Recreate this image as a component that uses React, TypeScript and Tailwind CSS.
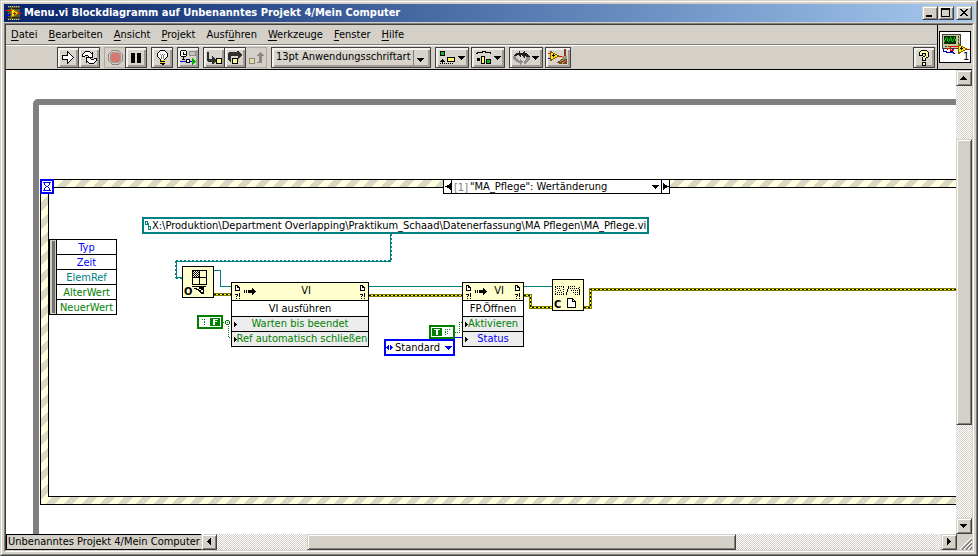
import React from 'react';

interface ToolButtonProps {
  label: string;
  disabled?: boolean;
  wide?: boolean;
  children: React.ReactNode;
}

const raised =
  'border border-t-[#d4d0c8] border-l-[#d4d0c8] border-r-[#404040] border-b-[#404040] shadow-[inset_1px_1px_0_#fff,inset_-1px_-1px_0_#808080] bg-[#d4d0c8]';
const checker =
  'bg-[conic-gradient(#fff_25%,#d4d0c8_0_50%,#fff_0_75%,#d4d0c8_0)] bg-size-[2px_2px]';

const Drawing: React.FC<{ w: number; h: number; children: React.ReactNode }> = ({ w, h, children }) => (
  <svg width={w} height={h} viewBox={`0 0 ${w} ${h}`} fill="none" shapeRendering="crispEdges" aria-hidden="true" className="block shrink-0">
    {children}
  </svg>
);

const ToolButton: React.FC<ToolButtonProps> = ({ label, disabled, wide, children }) => (
  <button
    aria-label={label}
    disabled={disabled}
    className={`flex h-[21px] shrink-0 items-center justify-center border ${wide ? 'w-[34px] gap-0.5' : 'w-[22px]'} ${
      disabled
        ? 'border-[#aca8a0] bg-[#d4d0c8]'
        : 'relative border-[#404040] bg-[#d8d4cc] shadow-[inset_2px_2px_0_#f4f2ee,inset_-2px_-2px_0_#a09c94]'
    }`}
  >
    {children}
  </button>
);

const SmallDown = () => (
  <Drawing w={7} h={4}>
    <path fill="#000" d="M0 0h7v1h-1v1h-1v1h-1v1h-1v-1h-1v-1h-1v-1h-1z" />
  </Drawing>
);

const menus = ['Datei', 'Bearbeiten', 'Ansicht', 'Projekt', 'Ausführen', 'Werkzeuge', 'Fenster', 'Hilfe'];
const hotkeys: Record<string, number> = { Ausführen: 4 };

const TitleBar = () => (
  <div className="flex h-[18px] shrink-0 items-center bg-linear-to-r from-[#0a246a] to-[#a6caf0] px-0.5 text-white">
    <Drawing w={16} h={16}>
      <path fill="#585838" d="M2 1h12v14h-12z" />
      <path stroke="#d0d0a8" strokeDasharray="1 1" d="M2 1.5h12M2 14.5h12" />
      <path stroke="#202010" d="M2 3.5h12M2 12.5h12" />
      <path fill="#ffe000" stroke="#a08000" d="M5.5 3.5v9l7-4.5z" />
      <path stroke="#f00" d="M0 5.5h5M12 8.5h4" />
      <path stroke="#00f" d="M0 10.5h3v-1h2" />
      <path stroke="#804000" d="M7 8.5h3M8.5 7v3" />
    </Drawing>
    <h1 className="ml-0.5 flex-1 truncate text-[11px] leading-4 font-bold">
      Menu.vi Blockdiagramm auf Unbenanntes Projekt 4/Mein Computer
    </h1>
    <button aria-label="Minimieren" className={`h-3.5 w-4 ${raised}`}>
      <Drawing w={14} h={12}><path fill="#000" d="M3 8h6v2h-6z" /></Drawing>
    </button>
    <button aria-label="Maximieren" className={`h-3.5 w-4 ${raised}`}>
      <Drawing w={14} h={12}><path stroke="#000" d="M2.5 1.5h8v8h-8zM2 2.5h9" /></Drawing>
    </button>
    <button aria-label="Schließen" className={`ml-0.5 h-3.5 w-4 ${raised}`}>
      <Drawing w={14} h={12}>
        <path fill="#000" d="M3 2h2v1h1v1h2v-1h1v-1h2v1h-1v1h-1v1h-1v1h1v1h1v1h1v1h-2v-1h-1v-1h-2v1h-1v1h-2v-1h1v-1h1v-1h1v-1h-1v-1h-1v-1h-1z" />
      </Drawing>
    </button>
  </div>
);

const Toolbar = () => (
  <div className="flex h-6 items-center gap-1 border-t border-white pl-[51px] pr-0.5">
    <div className="flex -space-x-px">
      <ToolButton label="Ausführen">
        <Drawing w={12} h={13}><path fill="#fff" stroke="#000" d="M.5 4.5h5v-4l6 6-6 6v-4h-5z" /></Drawing>
      </ToolButton>
      <ToolButton label="Wiederholt ausführen">
        <Drawing w={17} h={15}>
          <path fill="#fff" stroke="#000" d="M3.5 6.5h-2v-2l3-3h4l2 2 1-1v5h-5l1-1-1-1h-2l-1 1z" />
          <path fill="#fff" stroke="#000" d="M13.5 8.5h2v2l-3 3h-4l-2-2-1 1v-5h5l-1 1 1 1h2l1-1z" />
        </Drawing>
      </ToolButton>
    </div>
    <div className="flex -space-x-px">
      <ToolButton label="Abbrechen" disabled>
        <Drawing w={15} h={15}>
          <path fill="#d4d0c8" stroke="#8c8880" d="M4.5.5h6l4 4v6l-4 4h-6l-4-4v-6z" />
          <path fill="#d87870" stroke="#a89490" d="M5 2.5h5l2.5 2.5v5l-2.5 2.5h-5l-2.5-2.5v-5z" />
        </Drawing>
      </ToolButton>
      <ToolButton label="Pause">
        <Drawing w={10} h={10}><path fill="#000" d="M0 0h4v10h-4zM6 0h4v10h-4z" /></Drawing>
      </ToolButton>
    </div>
    <ToolButton label="Highlight-Funktion">
      <Drawing w={11} h={15}>
        <path fill="#fff" stroke="#000" d="M3.5.5h4l3 3v3l-3 3v1h-4v-1l-3-3v-3z" />
        <path stroke="#808080" d="M4.5 9v-4M6.5 9v-4M3 4.5h1M5 4.5h1M7 4.5h1" />
        <path fill="#e8d020" d="M4 10h4v3h-4z" />
        <path stroke="#000" d="M3 11.5h5M3 13.5h5M5 14.5h2" />
      </Drawing>
    </ToolButton>
    <ToolButton label="Verbindungswerte speichern">
      <Drawing w={16} h={15}>
        <path fill="#fff" stroke="#000" d="M1.5.5h4l1 1v4l-1 1h-4l-1-1v-4z" />
        <path stroke="#000" d="M3.5 2v2h2M3.5 7v3M2 9.5h3" />
        <path fill="#c4c4c4" stroke="#909090" d="M9.5 1.5h6v4h-6z" />
        <path stroke="#00f" d="M0 11.5h6M9 11.5h3" />
        <path fill="#fff" stroke="#000" d="M6.5 9.5h3v3h-3z" />
        <path fill="#00b000" d="M12 8l4 3.5-4 3.5z" />
      </Drawing>
    </ToolButton>
    <div className="flex -space-x-px">
      <ToolButton label="Hineinspringen">
        <Drawing w={16} h={14}>
          <path fill="#303030" d="M1 1h2v7h3v-3h1l3 4v1l-3 3h-1v-2h-4l-1-1z" />
          <path fill="#ffff80" stroke="#000" d="M10.5 7.5h5v5h-5z" />
        </Drawing>
      </ToolButton>
      <ToolButton label="Überspringen">
        <Drawing w={16} h={14}>
          <path fill="#303030" d="M1 2l1-1h8v-1h1l4 3v1l-3 4h-1v-3h-7v6h-1l-2-2z" />
          <path fill="#ffff80" stroke="#000" d="M5.5 7.5h5v5h-5z" />
        </Drawing>
      </ToolButton>
      <ToolButton label="Herausspringen" disabled>
        <Drawing w={16} h={14}>
          <path fill="#8c8880" d="M9 11h2v-6h-3l4-4 4 4h-2v7h-5z" />
          <path fill="#e0e0a8" stroke="#8c8880" d="M1.5 7.5h5v5h-5z" />
        </Drawing>
      </ToolButton>
    </div>
    <div className="relative">
      <select
        aria-label="Schriftart"
        className="block h-[21px] w-[160px] appearance-none border border-[#404040] bg-[#d8d4cc] pb-0.5 pl-1 text-[11px] leading-4 shadow-[inset_2px_2px_0_#f4f2ee,inset_-2px_-2px_0_#a09c94]"
      >
        <option>13pt Anwendungsschriftart</option>
      </select>
      <div className="pointer-events-none absolute inset-y-[3px] right-0 flex w-[18px] items-center justify-center border-l border-[#808080] pt-1 pr-1">
        <SmallDown />
      </div>
    </div>
    <div className="flex gap-0.5">
      <ToolButton label="Objekte ausrichten" wide>
        <Drawing w={16} h={13}>
          <path fill="#00c020" stroke="#000" d="M.5.5h4v4h-4z" />
          <path stroke="#000" d="M2.5 8v4M0 10.5h5M1 9.500h3" />
          <path stroke="#000" strokeDasharray="1 1" d="M0 12.5h14" />
          <path fill="#ffff60" stroke="#000" d="M7.5 6.5h7v4h-7z" />
        </Drawing>
        <SmallDown />
      </ToolButton>
      <ToolButton label="Objekte einteilen" wide>
        <Drawing w={16} h={13}>
          <path stroke="#000" d="M0 2.5h1v-1h5v-1h3v1h5v1h1" />
          <path fill="#000" d="M1 7h3v3h-3z" />
          <path fill="#ffff60" stroke="#000" d="M5.5 5.5h3v7h-3z" />
          <path fill="#00c020" stroke="#000" d="M10.5 8.5h4v4h-4z" />
        </Drawing>
        <SmallDown />
      </ToolButton>
    </div>
    <div className="flex gap-0.5">
      <ToolButton label="Neu anordnen" wide>
        <Drawing w={17} h={14}>
          <path fill="#909090" d="M0 5h3l1 3 3 2v-2l3 3-3 3v-2l-4-1-3-3zM13 5h4v3l-3 4-3 1v-3l2-2z" />
          <path fill="#202020" d="M1 4l2-2h3v-2h1v2h2l3-2v2l3 1 2 3h-4l-1-1v2l-4-3v2h-1l-2-2h-1v1h-3z" />
          <path fill="#fff" d="M8 8h1v1h-1zM9 12h1v1h-1z" />
        </Drawing>
        <SmallDown />
      </ToolButton>
      <button
        aria-label="Diagramm aufräumen"
        className="flex h-[21px] w-[26px] items-center justify-center border border-[#404040] bg-[#d8d4cc] shadow-[inset_2px_2px_0_#f4f2ee,inset_-2px_-2px_0_#a09c94]"
      >
        <Drawing w={20} h={17}>
          <path stroke="#f00" d="M0 4.5h3M11 7.5h4" />
          <path stroke="#00f" d="M0 9.5h3" />
          <path fill="#ffe800" stroke="#806000" d="M2.5 2.5v9l8-4.5z" />
          <path stroke="#000" d="M4 6.5h3M5.5 5v3" />
          <path fill="#903020" d="M16 0h2v7h-2z" />
          <path fill="#a09880" d="M14 7h5v3h-5z" />
          <path fill="#704820" d="M13 10h6v5h-7l-4-2 4-1z" />
          <path stroke="#c09858" d="M12 12.5l4-2M14 14.5l4-3" />
        </Drawing>
      </button>
    </div>
    <div className="ml-auto">
      <ToolButton label="Hilfe anzeigen">
        <Drawing w={12} h={16}>
          <path fill="#ffffa0" stroke="#000" d="M3.5.5h5l2 2v4l-3 2v2h-3v-3l3-2v-2h-3v2h-3v-3zM4.5 12.5h3v3h-3z" />
        </Drawing>
      </ToolButton>
    </div>
  </div>
);

const Header = () => (
  <header className="flex h-[45px] shrink-0 border-b border-black">
    <div className="min-w-0 flex-1">
      <nav className="flex h-5 items-center gap-[11px] border-b border-[#808080] pl-[5px]">
        {menus.map((name) => {
          const k = hotkeys[name] ?? 0;
          return (
            <button key={name} className="leading-4">
              {name.slice(0, k)}
              <span className="underline underline-offset-2">{name[k]}</span>
              {name.slice(k + 1)}
            </button>
          );
        })}
      </nav>
      <Toolbar />
    </div>
    <div className="flex w-[35px] items-center justify-center border-l border-black">
      <div className="border border-black bg-white">
        <Drawing w={30} h={30}>
          <path fill="#c8c8a0" stroke="#404030" d="M2.5 2.5h18v14h-18z" />
          <path fill="#003000" d="M4 4h12v8h-12z" />
          <path fill="#00d000" d="M4 8h1v2h-1zM5 6h1v2h-1zM6 5h1v1h-1zM7 6h1v3h-1zM8 9h1v1h-1zM9 7h1v2h-1zM10 5h1v2h-1zM11 6h1v3h-1zM12 9h1v1h-1zM13 7h1v2h-1zM14 5h1v2h-1zM15 7h1v2h-1z" />
          <path stroke="#404020" strokeDasharray="2 1" d="M18.5 4v12M5 14.5h11" />
          <path stroke="#0000a0" d="M3.500 17v2h3v1h4v-1h2v-2M11 20.5h2v1h2" />
          <path stroke="#f00" d="M7.5 18v-2h3v-2h8M10 15.5v3h3v-2M25 17.5h5" />
          <path fill="#ffe800" stroke="#806000" d="M18.5 12.5v9l8-4.5z" />
          <path stroke="#000" d="M20 16.5h3M21.5 15v3" />
          <text x="23" y="28" fontSize="11" fill="#000">1</text>
        </Drawing>
      </div>
    </div>
  </header>
);

const ErrorWire: React.FC<{ d: string }> = ({ d }) => (
  <>
    <path stroke="#808000" strokeWidth="3" d={d} />
    <path stroke="#ffff00" d={d} />
    <path stroke="#000" strokeDasharray="2 2" d={d} />
  </>
);

// wires use window coordinates, shifted by the viewBox origin
const Wires = () => (
  <svg className="absolute top-0 left-0 overflow-visible" width="950" height="464" viewBox="6 70 950 464" fill="none" shapeRendering="crispEdges" aria-hidden="true">
    <path stroke="#008080" strokeDasharray="2 2" d="M391.5 234v28M390 260.5h-214M175.5 261v17M176 278.5h6" />
    <path stroke="#008080" d="M390.5 234v28M391 261.5h-215M176.5 261v17M176 277.5h6" />
    <path stroke="#008080" d="M214 270.5h6.5v16h10.5M369 286.5h93M524 286.5h28" />
    <ErrorWire d="M214 294.5h17" />
    <ErrorWire d="M369 295.5h93" />
    <ErrorWire d="M524 295.5h6.5v12h21.5" />
    <ErrorWire d="M584 307.5h6.5v-18h2000" />
    <path stroke="#008000" strokeDasharray="1 1" d="M223 322.5h8M228.5 324v13.5h3M455 332.5h4.5v-10h3" />
    <path stroke="#008000" fill="#fff" d="M226.5 320.5h2l1 1v2l-1 1h-2l-1-1v-2z" />
    <path fill="#008000" d="M227 322h1v1h-1z" />
    <path stroke="#00f" d="M455 337.5h7" />
  </svg>
);

const PageMarks = () => (
  <Drawing w={7} h={16}>
    <path fill="#fff" stroke="#000" d="M1.5 1.5h2l2 2v3h-4zM3.5 1.5v2h2" />
    <path stroke="#000" d="M1 10.5h2M3.5 10v2M2 12.5h1M2 14.5h1M5.5 9v4M5 14.5h1" />
  </Drawing>
);

const DashArrow = () => (
  <Drawing w={12} h={7}>
    <path fill="#000" d="M0 2h1v3h-1zM2 2h1v3h-1zM4 2h4v-2h1v1h1v1h1v1h1v1h-1v1h-1v1h-1v1h-1v-2h-4z" />
  </Drawing>
);

interface MethodNodeProps {
  method: string;
  className: string;
  children: React.ReactNode;
}

const MethodNode: React.FC<MethodNodeProps> = ({ method, className, children }) => (
  <div className={`absolute top-[212px] border border-black bg-white text-center ${className}`}>
    <div className="relative flex h-[17px] items-center justify-between bg-[#ffffce] px-0.5">
      <PageMarks />
      <span className="absolute left-3"><DashArrow /></span>
      <span className="flex-1 pl-3">VI</span>
      <PageMarks />
    </div>
    <div className="h-4 border-t border-black leading-[15px]">{method}</div>
    {children}
  </div>
);

const Param: React.FC<{ children: string; color: string }> = ({ children, color }) => (
  <div className={`relative h-[15px] border-t border-black bg-[#ececec] leading-[14px] whitespace-nowrap ${color}`}>
    <span className="absolute top-[5px] left-0.5">
      <Drawing w={3} h={5}><path fill="#000" d="M0 0h1v1h1v1h1v1h-1v1h-1v1h-1z" /></Drawing>
    </span>
    {children}
  </div>
);

const Diagram = () => (
  <main className="relative min-w-0 flex-1 overflow-hidden bg-white">
    <div className="absolute top-[29px] -right-2 -bottom-2 left-[27px] rounded-[5px] border-6 border-[#808080]" />
    <div className="absolute top-[109px] -right-5 left-[34px] flex h-[326px] border border-black bg-[linear-gradient(135deg,#ffffe0_25%,#d8d8c4_25%_50%,#ffffe0_50%_75%,#d8d8c4_75%)] bg-size-[18px_18px] bg-position-[-5px_0px] p-[7px]">
      <div className="flex-1 border border-black bg-white" />
    </div>
    <div className="absolute top-[109px] left-[34px]">
      <Drawing w={14} h={15}>
        <path fill="#fff" stroke="#00f" strokeWidth="2" d="M1 1h12v13h-12z" />
        <path stroke="#00f" d="M3 3.5h8M3 11.5h8M4.5 4v2M9.5 4v2M5.5 6v1M8.5 6v1M6 7.5h2M5.5 8v1M8.5 8v1M4.5 9v2M9.5 9v2" />
      </Drawing>
    </div>

    <div className="absolute top-[109px] left-[437px] flex h-[15px] w-[227px] items-stretch border border-black bg-white">
      <button aria-label="Vorheriges Ereignis" className="flex w-2 items-center justify-center border-r border-black">
        <Drawing w={6} h={7}><path fill="#000" d="M6 0v7h-1v-1h-1v-1h-2v-1h-2v-1h2v-1h2v-1h1v-1z" /></Drawing>
      </button>
      <label className="flex min-w-0 flex-1 items-center pl-0.5 leading-[13px]">
        <span className="pt-px text-[#808080]">[1]</span>
        <select aria-label="Ereignis" className="h-[13px] min-w-0 flex-1 appearance-none pl-0.5 leading-[13px]">
          <option>"MA_Pflege": Wertänderung</option>
        </select>
        <Drawing w={10} h={4}><path fill="#000" d="M1 0h7v1h-1v1h-1v1h-1v1h-1v-1h-1v-1h-1v-1h-1z" /></Drawing>
      </label>
      <button aria-label="Nächstes Ereignis" className="flex w-2 items-center justify-center border-l border-black">
        <Drawing w={6} h={7}><path fill="#000" d="M0 0v7h1v-1h1v-1h2v-1h2v-1h-2v-1h-2v-1h-1v-1z" /></Drawing>
      </button>
    </div>

    <div className="absolute top-[147px] left-[136px] flex h-[17px] w-[507px] items-center border-2 border-[#008080]">
      <Drawing w={8} h={11}>
        <path stroke="#008080" d="M1.5 1.5h2v3h-2zM3 3.5h1.5v3M4.5 6.5h2v3h-2z" />
      </Drawing>
      <input aria-label="Pfad" readOnly defaultValue="X:\Produktion\Department Overlapping\Praktikum_Schaad\Datenerfassung\MA Pflegen\MA_Pflege.vi" className="h-[13px] min-w-0 flex-1 pt-px" />
    </div>

    <div className="absolute top-[169px] left-[43px] flex w-[68px] border border-black bg-white">
      <div className="flex w-[7px] justify-center border-r border-black bg-[#d0d0b8] py-px">
        <div className="w-[3px] bg-[#707070]" />
      </div>
      <ul className="flex-1 divide-y divide-black text-center leading-[15px]">
        <li className="h-[15px] text-[#0000ff]">Typ</li>
        <li className="h-[15px] text-[#0000ff]">Zeit</li>
        <li className="h-[15px] text-[#008080]">ElemRef</li>
        <li className="h-[15px] text-[#008000]">AlterWert</li>
        <li className="h-[14px] text-[#008000]">NeuerWert</li>
      </ul>
    </div>

    <Wires />

    <div className="absolute top-[196px] left-[176px]">
      <Drawing w={32} h={32}>
        <path fill="#ffffce" stroke="#000" d="M.5.5h31v31h-31z" />
        <path stroke="#000" d="M10.5 4.5h14v14h-14zM17.5 4v14M10 11.5h14" />
        <path stroke="#000" strokeDasharray="1 1" d="M11 5.5h6M12 6.5h6M11 7.5h6M12 8.5h6M11 9.5h6M12 10.5h6" />
        <path stroke="#000" d="M10 20.5h14M12 22.5h3M14 23.5h3M16 24.5h3M17 25.5h2M18 26.5h3M19 27.5h3M21.5 21v7" />
        <path fill="#000" d="M17 21h5v3h-3v-1h-2z" />
        <text x="2" y="29" fontSize="11" fontWeight="700" fill="#000">O</text>
      </Drawing>
    </div>

    <MethodNode method="VI ausführen" className="left-[225px] w-[138px]">
      <Param color="text-[#008000]">Warten bis beendet</Param>
      <Param color="pl-1 text-[#008000]">Ref automatisch schließen</Param>
    </MethodNode>
    <MethodNode method="FP.Öffnen" className="left-[456px] w-[62px]">
      <Param color="text-[#008000]">Aktivieren</Param>
      <Param color="text-[#0000ff]">Status</Param>
    </MethodNode>

    <div className="absolute top-[209px] left-[546px]">
      <Drawing w={32} h={32}>
        <path fill="#ffffce" stroke="#000" d="M.5.5h31v31h-31z" />
        <path stroke="#000" strokeDasharray="1 1" d="M3 7.5h9M3 15.5h9M3.5 8v8M11.5 8v8M5 9.5h4M6 11.5h4M5 13.5h5M18 7.5h6M18 9.5h10M19 11.5h9M21 13.5h8M23 15.5h6M27.5 8v8" />
        <path stroke="#000" d="M16.5 7v3M15.5 10v3M14.5 13v3" />
        <path fill="#fff" stroke="#000" d="M15.5 19.5h5l3 3v6h-8zM20.5 19.5v3h3" />
        <text x="2" y="29" fontSize="11" fontWeight="700" fill="#000">C</text>
      </Drawing>
    </div>

    <div className="absolute top-[245px] left-[191px]">
      <Drawing w={26} h={14}>
        <path fill="#fff" stroke="#008000" strokeWidth="2" d="M1 1h24v12h-24z" />
        <path stroke="#008000" strokeDasharray="1 1" d="M5 4.5h4M7 6.5h2M7.5 7v4" />
        <path fill="#008000" d="M13 3h10v8h-10z" />
        <path fill="#fff" d="M16 4h5v1h-3v1h2v1h-2v3h-2z" />
      </Drawing>
    </div>
    <div className="absolute top-[255px] left-[423px]">
      <Drawing w={26} h={14}>
        <path fill="#fff" stroke="#008000" strokeWidth="2" d="M1 1h24v12h-24z" />
        <path fill="#008000" d="M3 3h10v8h-10z" />
        <path fill="#fff" d="M5 4h6v1h-2v5h-2v-5h-2z" />
        <path stroke="#008000" strokeDasharray="1 1" d="M16 4.5h5M16 6.5h3M16.5 7v4M18 8.5h2" />
      </Drawing>
    </div>

    <div className="absolute top-[269px] left-[378px] flex h-[17px] w-[71px] items-center border-2 border-[#0000ff] bg-white">
      <Drawing w={8} h={7}>
        <path fill="#00f" d="M3 1v5h-1v-1h-1v-1h-1v-1h1v-1h1v-1zM4 1v5h1v-1h1v-1h1v-1h-1v-1h-1v-1z" />
      </Drawing>
      <select aria-label="FP-Status" className="h-[13px] min-w-0 flex-1 appearance-none pl-px leading-[13px]">
        <option>Standard</option>
      </select>
      <Drawing w={8} h={4}><path fill="#00f" d="M0 0h7v1h-1v1h-1v1h-1v1h-1v-1h-1v-1h-1v-1h-1z" /></Drawing>
    </div>
  </main>
);

const ScrollButton: React.FC<{ label: string; d: string }> = ({ label, d }) => (
  <button aria-label={label} className={`size-4 shrink-0 ${raised}`}>
    <Drawing w={14} h={14}><path fill="#000" d={d} /></Drawing>
  </button>
);

const App: React.FC = () => (
  <div className="flex h-screen flex-col border border-t-[#d4d0c8] border-r-[#404040] border-b-[#404040] border-l-[#d4d0c8] bg-[#d4d0c8] font-['DejaVu_Sans_Condensed','DejaVu_Sans',sans-serif] text-[11px] text-black">
    <div className="flex min-h-0 flex-1 flex-col border border-t-white border-r-[#808080] border-b-[#808080] border-l-white p-0.5">
      <TitleBar />
      <div className="mt-px flex min-h-0 flex-1 flex-col border border-t-[#808080] border-r-white border-b-white border-l-[#808080]">
        <div className="flex min-h-0 flex-1 flex-col border border-t-[#404040] border-r-[#d4d0c8] border-b-[#d4d0c8] border-l-[#404040]">
          <Header />
          <div className="flex min-h-0 flex-1">
            <Diagram />
            <div className={`flex w-4 flex-col ${checker}`}>
              <ScrollButton label="Nach oben" d="M7 5v1h1v1h1v1h1v1h-7v-1h1v-1h1v-1h1v-1z" />
              <div className="grow-53 basis-0" />
              <div className={`grow-286 basis-0 ${raised}`} />
              <div className="grow-94 basis-0" />
              <ScrollButton label="Nach unten" d="M3 5h7v1h-1v1h-1v1h-1v1h-1v-1h-1v-1h-1v-1h-1z" />
            </div>
          </div>
          <footer className="flex h-4 shrink-0">
            <button className="h-4 shrink-0 border-y border-l border-black px-px text-left leading-[14px] whitespace-nowrap">
              Unbenanntes Projekt 4/Mein Computer
            </button>
            <div className={`flex flex-1 ${checker}`}>
              <ScrollButton label="Nach links" d="M5 6v1h1v1h1v1h1v1h1v-7h-1v1h-1v1h-1v1z" />
              <div className="grow-90 basis-0" />
              <div className={`grow-428 basis-0 ${raised}`} />
              <div className="grow-206 basis-0" />
              <ScrollButton label="Nach rechts" d="M5 3h1v1h1v1h1v1h1v1h-1v1h-1v1h-1v1h-1z" />
            </div>
            <Drawing w={15} h={16}>
              <path stroke="#fff" d="M3 15L15 3M7 15L15 7M11 15L15 11" />
              <path stroke="#808080" strokeWidth="2" d="M5 15.5L15 5.5M9 15.5L15 9.5M13 15.5L15 13.5" />
            </Drawing>
          </footer>
        </div>
      </div>
    </div>
  </div>
);

export default App;
